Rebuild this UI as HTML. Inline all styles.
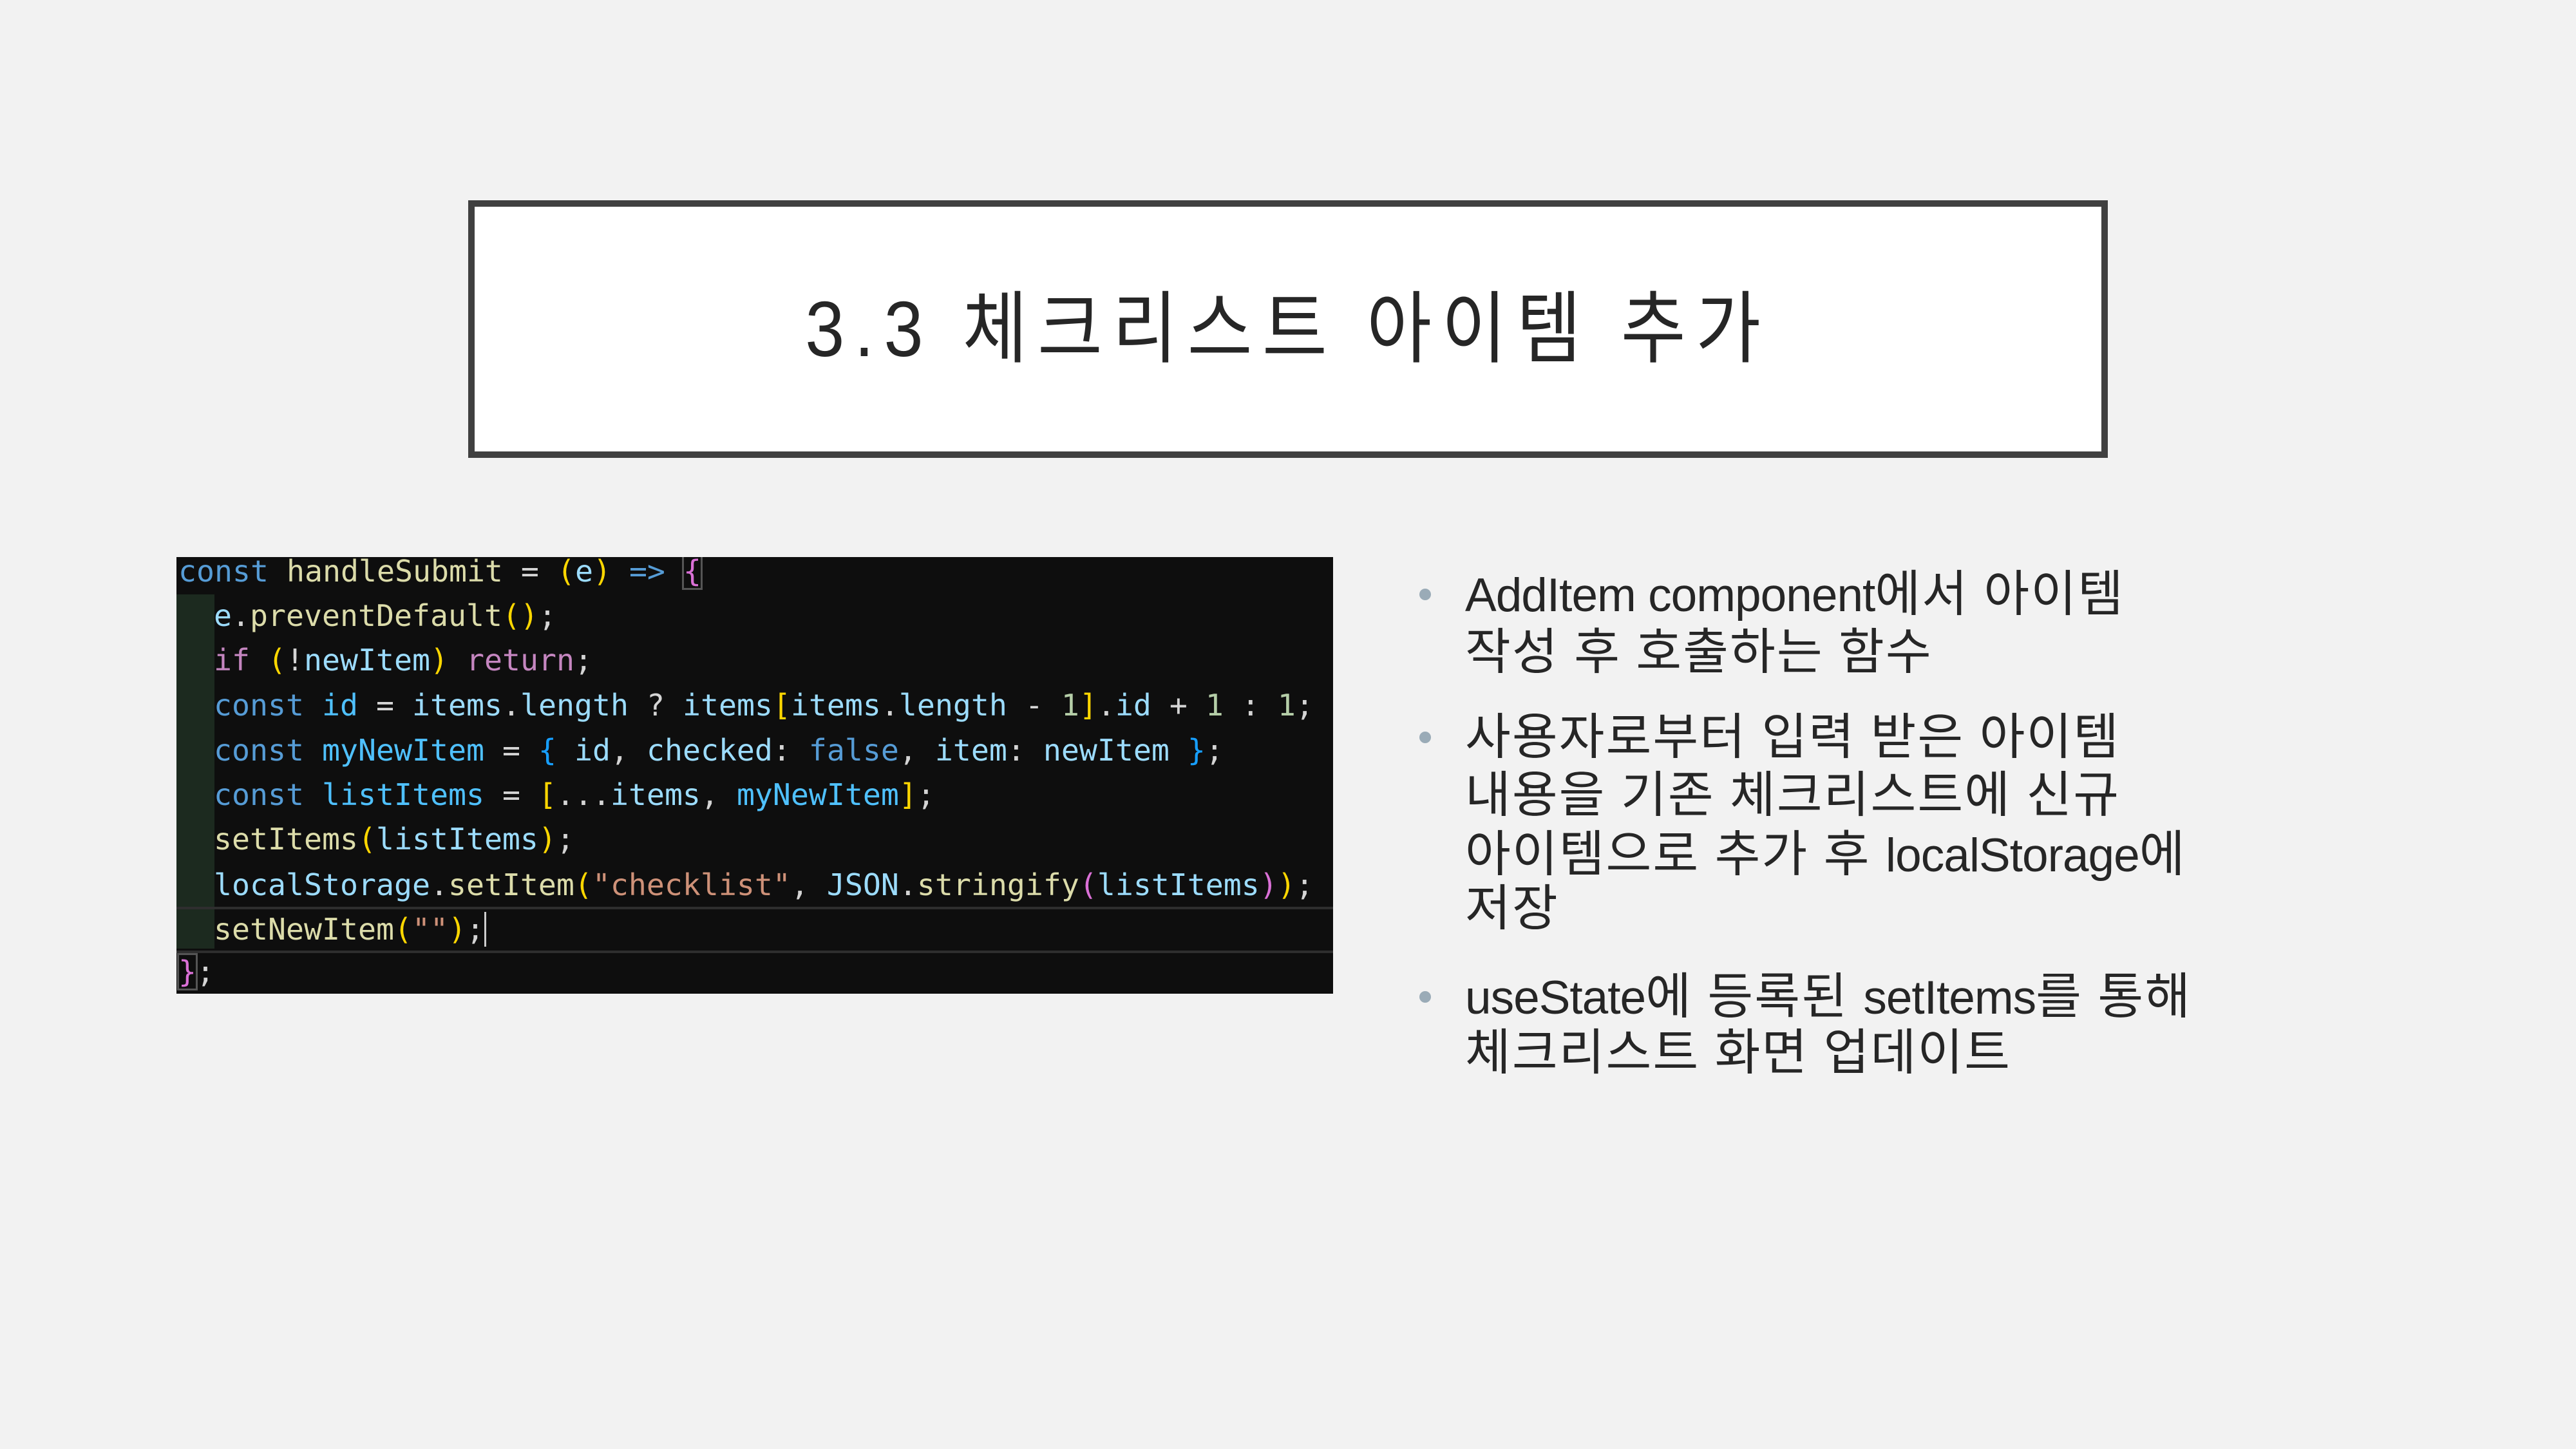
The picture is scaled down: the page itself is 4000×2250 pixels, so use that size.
<!DOCTYPE html>
<html><head><meta charset="utf-8"><style>
html,body{margin:0;padding:0}
body{width:4000px;height:2250px;background:#f2f2f2;position:relative;overflow:hidden;font-family:"Liberation Sans","Noto Sans CJK KR",sans-serif}
.tbox{position:absolute;left:727px;top:311px;width:2526px;height:380px;border:10px solid #404040;background:#fff}
.title{position:absolute;left:0;right:0;top:0;bottom:0;display:flex;align-items:center;justify-content:center}
.title span{display:inline-block;font-size:122px;color:#262626;white-space:nowrap;transform:scaleX(0.9);letter-spacing:17px;line-height:1}
.code{position:absolute;left:274px;top:865px;width:1796px;height:678px;background:#0e0e0e;overflow:hidden;font-family:"DejaVu Sans Mono","Liberation Mono",monospace;font-size:46.5px;color:#d4d4d4}
.gut{position:absolute;left:0;top:58px;width:59px;height:550px;background:#1c2a1f}
.cur{position:absolute;left:0;right:0;height:64px;border-top:4px solid #2e2e2e;border-bottom:4px solid #2e2e2e}
.ln{position:absolute;white-space:pre;line-height:69px;height:69px}
.k{color:#569cd6}.f{color:#dcdcaa}.v{color:#9cdcfe}.c{color:#4fc1ff}.y{color:#ffd700}.m{color:#da70d6}.p{color:#c586c0}.n{color:#b5cea8}.s{color:#ce9178}.b{color:#179fff}
.bx{outline:3px solid #555;outline-offset:-1px}
.bl{position:absolute;left:2275px;font-size:77px;line-height:90px;height:90px;color:#262626;white-space:nowrap;letter-spacing:2px}
.bl i{font-style:normal;font-size:73px;letter-spacing:-1px}
.dot{position:absolute;left:2204px;width:18px;height:18px;border-radius:50%;background:#9aabb7}
</style></head><body>
<div class="tbox"><div class="title"><span>3.3 체크리스트 아이템 추가</span></div></div>

<div class="code">
<div class="gut"></div>
<div class="cur" style="top:543px"></div>
<div class="ln" style="left:3px;top:-12px"><span class="k">const</span> <span class="f">handleSubmit</span> = <span class="y">(</span><span class="v">e</span><span class="y">)</span> <span class="k">=&gt;</span> <span class="m bx">{</span></div>
<div class="ln" style="left:58px;top:57px"><span class="v">e</span>.<span class="f">preventDefault</span><span class="y">()</span>;</div>
<div class="ln" style="left:58px;top:126px"><span class="p">if</span> <span class="y">(</span>!<span class="v">newItem</span><span class="y">)</span> <span class="p">return</span>;</div>
<div class="ln" style="left:58px;top:196px"><span class="k">const</span> <span class="c">id</span> = <span class="v">items</span>.<span class="v">length</span> ? <span class="v">items</span><span class="y">[</span><span class="v">items</span>.<span class="v">length</span> - <span class="n">1</span><span class="y">]</span>.<span class="v">id</span> + <span class="n">1</span> : <span class="n">1</span>;</div>
<div class="ln" style="left:58px;top:266px"><span class="k">const</span> <span class="c">myNewItem</span> = <span class="b">{</span> <span class="v">id</span>, <span class="v">checked</span>: <span class="k">false</span>, <span class="v">item</span>: <span class="v">newItem</span> <span class="b">}</span>;</div>
<div class="ln" style="left:58px;top:335px"><span class="k">const</span> <span class="c">listItems</span> = <span class="y">[</span>...<span class="v">items</span>, <span class="c">myNewItem</span><span class="y">]</span>;</div>
<div class="ln" style="left:58px;top:404px"><span class="f">setItems</span><span class="y">(</span><span class="v">listItems</span><span class="y">)</span>;</div>
<div class="ln" style="left:58px;top:475px"><span class="v">localStorage</span>.<span class="f">setItem</span><span class="y">(</span><span class="s">"checklist"</span>, <span class="v">JSON</span>.<span class="f">stringify</span><span class="m">(</span><span class="v">listItems</span><span class="m">)</span><span class="y">)</span>;</div>
<div class="ln" style="left:58px;top:544px"><span class="f">setNewItem</span><span class="y">(</span><span class="s">""</span><span class="y">)</span>;<span style="border-left:3px solid #ccc"></span></div>
<div class="ln" style="left:3px;top:610px"><span class="m bx">}</span>;</div>
</div>

<div class="dot" style="top:914px"></div>
<div class="bl" style="top:878px"><i>AddItem component</i>에서 아이템</div>
<div class="bl" style="top:968px">작성 후 호출하는 함수</div>
<div class="dot" style="top:1136px"></div>
<div class="bl" style="top:1100px">사용자로부터 입력 받은 아이템</div>
<div class="bl" style="top:1190px">내용을 기존 체크리스트에 신규</div>
<div class="bl" style="top:1282px">아이템으로 추가 후 <i>localStorage</i>에</div>
<div class="bl" style="top:1366px">저장</div>
<div class="dot" style="top:1539px"></div>
<div class="bl" style="top:1503px"><i>useState</i>에 등록된 <i>setItems</i>를 통해</div>
<div class="bl" style="top:1590px">체크리스트 화면 업데이트</div>
</body></html>
